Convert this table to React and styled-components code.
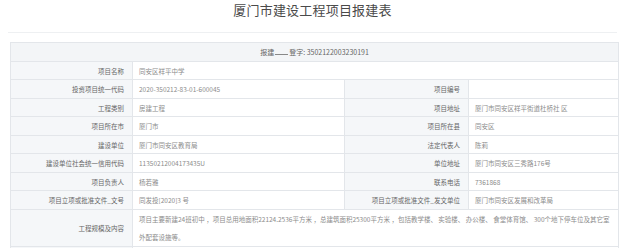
import React from "react";
import styled, { createGlobalStyle } from "styled-components";

const GlobalStyle = createGlobalStyle`
  body {
    margin: 0;
    background: #fff;
    font-family: "Noto Sans CJK SC", "Liberation Sans", sans-serif;
  }
`;

const rows = [
  [["项目名称", "同安区祥平中学", 3]],
  [["投资项目统一代码", "2020-350212-83-01-600045"], ["项目编号", ""]],
  [["工程类别", "房建工程"], ["项目地址", "厦门市同安区祥平街道杜桥社 区"]],
  [["项目所在市", "厦门市"], ["项目所在县", "同安区"]],
  [["建设单位", "厦门市同安区教育局"], ["法定代表人", "陈莉"]],
  [["建设单位社会统一信用代码", "11350212004173435U"], ["单位地址", "厦门市同安区三秀路176号"]],
  [["项目负责人", "杨若雅"], ["联系电话", "7361868"]],
  [["项目立项或批准文件_文号", "同发投[2020]3 号"], ["项目立项或批准文件_发文单位", "厦门市同安区发展和改革局"]],
];

const scopeLines = [
  "项目主要新建24班初中 ，项目总用地面积22124.2536平方米 ，总建筑面积25300平方米 ，包括教学楼、 实验楼、 办公楼、 食堂体育馆、 300个地下停车位及其它室",
  "外配套设施等。",
];

const Page = styled.div`
  width: 625px;
  height: 248px;
  overflow: hidden;
`;

const Title = styled.h1`
  margin: 0 8px;
  padding-top: 1px;
  height: 31px;
  border-bottom: 1px solid #eef0f2;
  font-size: 13px;
  font-weight: 400;
  line-height: 17px;
  color: #4a4a4a;
  text-align: center;
  letter-spacing: 0.2px;
`;

const Sheet = styled.div`
  padding: 9px 8px 0 10px;
`;

const Table = styled.table`
  width: 608px;
  table-layout: fixed;
  border-collapse: collapse;
  border: 1px solid #e3e6ea;
  font-size: 6.5px;
`;

const Row = styled.tr`
  height: ${(p) => p.$h}px;
`;

const Heading = styled.td`
  background: #f3f5f7;
  border: 1px solid #e3e6ea;
  text-align: center;
  color: #666;
  font-size: 7px;
  padding: 0;
`;

const Blank = styled.span`
  display: inline-block;
  width: 13px;
  border-bottom: 1px solid #888;
  margin: 0 1px;
`;

const Label = styled.td`
  background: #f5f7f9;
  border: 1px solid #e3e6ea;
  text-align: right;
  padding: 0 8px 0 0;
  color: #666;
  white-space: nowrap;
`;

const Value = styled.td`
  border: 1px solid #e3e6ea;
  padding: 0 0 0 6px;
  color: #8c8c8c;
  white-space: nowrap;
  overflow: hidden;
  line-height: ${(p) => (p.$tall ? "18px" : "normal")};
`;

export default function App() {
  const heights = [18, 19, 18, 19, 18, 19, 18, 19];
  return (
    <Page>
      <GlobalStyle />
      <Title>厦门市建设工程项目报建表</Title>
      <Sheet>
        <Table>
          <colgroup>
            <col style={{ width: 122 }} />
            <col style={{ width: 212 }} />
            <col style={{ width: 124 }} />
            <col style={{ width: 150 }} />
          </colgroup>
          <tbody>
            <Row $h={19}>
              <Heading colSpan={4}>
                报建<Blank />登字: 3502122003230191
              </Heading>
            </Row>
            {rows.map((cells, i) => (
              <Row key={i} $h={heights[i]}>
                {cells.map(([label, value, span]) => (
                  <React.Fragment key={label}>
                    <Label>{label}</Label>
                    <Value colSpan={span || 1}>{value}</Value>
                  </React.Fragment>
                ))}
              </Row>
            ))}
            <Row $h={35}>
              <Label>工程规模及内容</Label>
              <Value colSpan={3} $tall>
                {scopeLines[0]}
                <br />
                {scopeLines[1]}
              </Value>
            </Row>
            <Row $h={18}>
              <Label />
              <Value colSpan={3} />
            </Row>
          </tbody>
        </Table>
      </Sheet>
    </Page>
  );
}
